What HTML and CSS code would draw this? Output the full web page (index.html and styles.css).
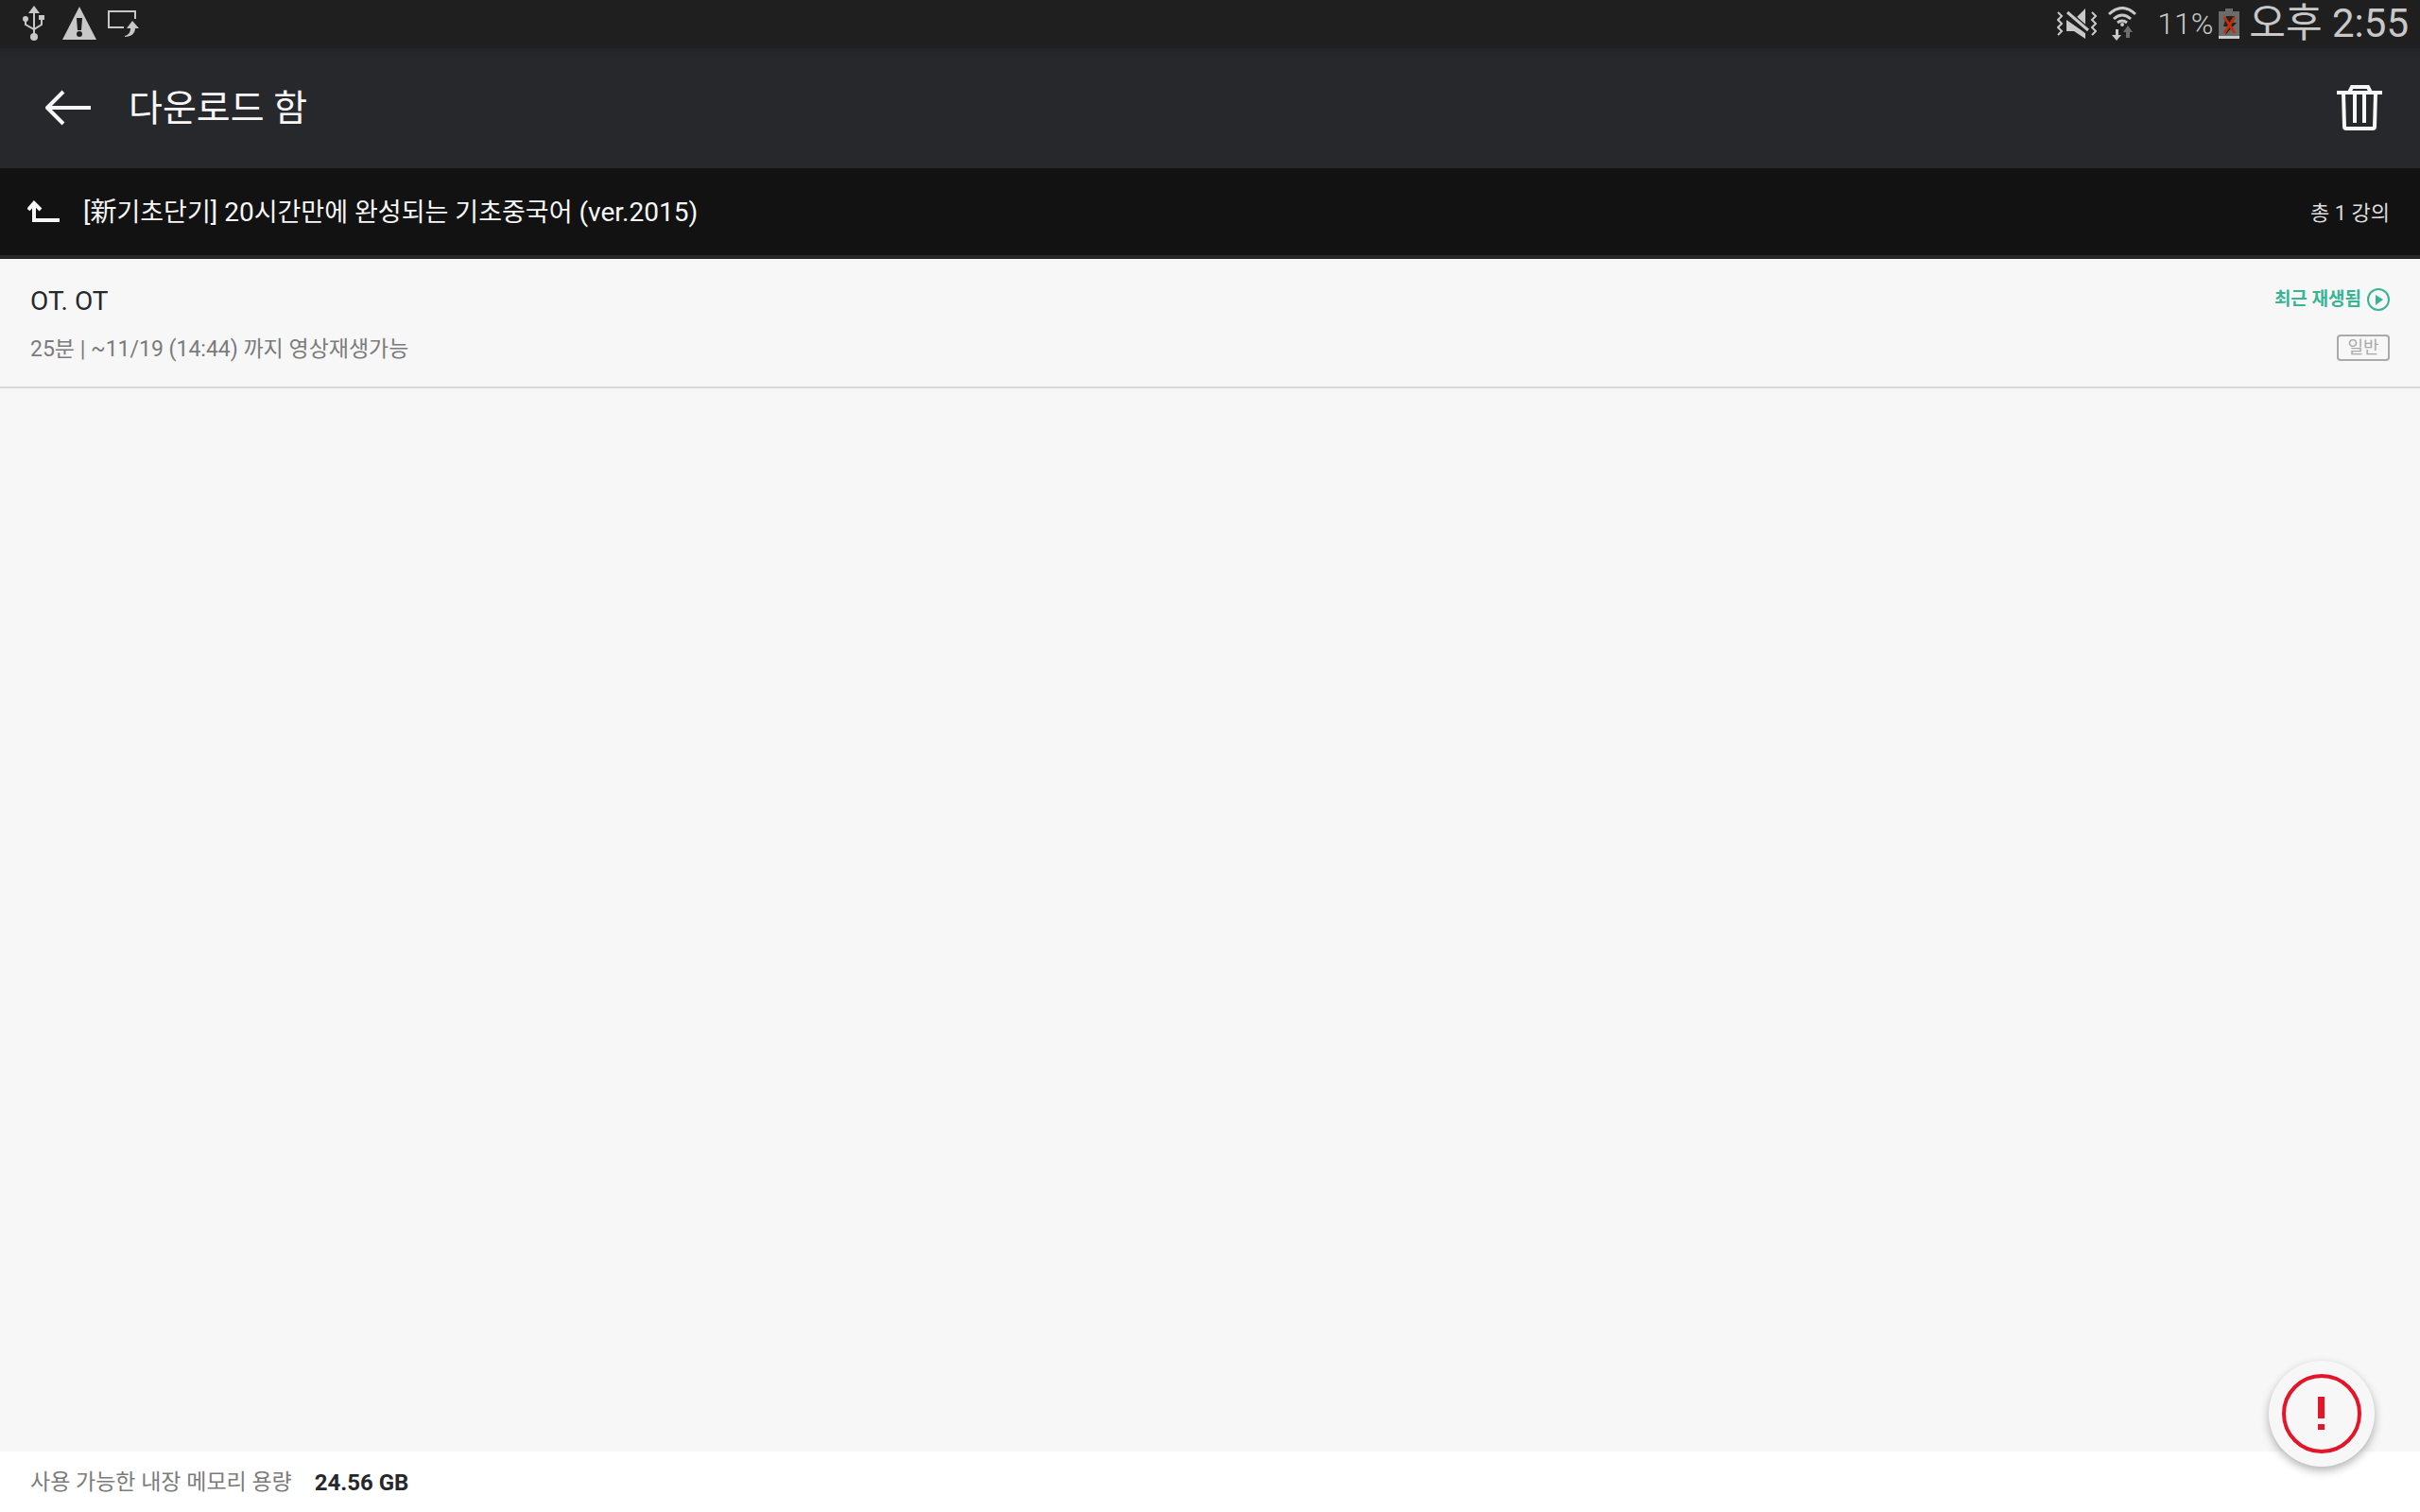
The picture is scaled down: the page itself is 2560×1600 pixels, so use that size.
FILE: index.html
```html
<!DOCTYPE html>
<html lang="ko">
<head>
<meta charset="UTF-8">
<meta name="viewport" content="width=device-width, initial-scale=1.0">
<title>다운로드 함</title>
<link rel="stylesheet" href="styles.css">
</head>
<body>

<div class="statusbar">
  <div class="notifications">
    <svg class="usb" width="24" height="38" viewBox="0 0 24 38" fill="currentColor">
      <path d="M12 0l6 8h-12z"/>
      <circle cx="3" cy="14" r="3"/>
      <path d="M17 10h6v5h-6z"/>
      <circle cx="12" cy="33" r="4"/>
      <path d="M12 6v26M3 14v6l9 5 8-5v-6" fill="none" stroke="currentColor" stroke-width="2"/>
    </svg>
    <svg class="warning" width="36" height="38" viewBox="0 0 36 38">
      <path d="M18 1l18 35h-36z" fill="currentColor"/>
      <path d="M15 13h6l-1 13h-4z" fill="#1f1f1f"/>
      <circle cx="18" cy="30" r="3" fill="#1f1f1f"/>
    </svg>
    <svg class="cast" width="33" height="38" viewBox="0 0 33 38">
      <path d="M17 23H1V6h28v8" fill="none" stroke="currentColor" stroke-width="2"/>
      <path d="M26 16l7 8h-4c0 5-4 9-11 9v-1c4-1 6-4 6-8h-4z" fill="currentColor"/>
    </svg>
  </div>
  <div class="system">
    <svg class="vibrate" width="42" height="34" viewBox="0 0 42 34">
      <path d="M1 5l4 4-4 4 4 4-4 4 4 4-4 4M37 5l4 4-4 4 4 4-4 4 4 4-4 4" fill="none" stroke="currentColor" stroke-width="2"/>
      <path d="M30 1v18l-9-9zM10 13l20 14v6l-12-8h-8z" fill="currentColor"/>
      <path d="M10 5l23 20" stroke="#1f1f1f" stroke-width="7"/>
      <path d="M11 5l22 19" stroke="currentColor" stroke-width="3"/>
    </svg>
    <svg class="wifi" width="30" height="36" viewBox="0 0 30 36">
      <g fill="none" stroke="currentColor" stroke-width="3">
        <path d="M1 8Q15-5 29 8M6 13Q15 5 24 13M10 17Q15 13 20 17"/>
      </g>
      <circle cx="15" cy="19" r="2" fill="currentColor"/>
      <path d="M8 24h3v6h3l-5 6-5-6h4z" fill="currentColor"/>
      <path d="M19 33v-6h-3l5-7 5 7h-3v6z" fill="#6d6d6d"/>
    </svg>
    <span class="percent">11%</span>
    <svg class="battery" width="22" height="32" viewBox="0 0 22 32">
      <path d="M0 3h7v-3h8v3h7v26h-22z" fill="#6b6b6b"/>
      <path d="M0 29h22v3h-22z" fill="#ccc"/>
      <path d="M8 8h9l-2 7h4l-12 13 2-9h-4z" fill="#222"/>
      <path d="M6 9l11 17M17 9l-11 17" stroke="#c1300c" stroke-width="3"/>
    </svg>
    <span class="time">오후 2:55</span>
  </div>
</div>

<header class="appbar">
  <button class="icon-btn" aria-label="뒤로">
    <svg width="48" height="38" viewBox="0 0 48 38" fill="none" stroke="currentColor" stroke-width="4">
      <path d="M48 19H3M19 2L2 19l17 17" stroke-linejoin="round"/>
    </svg>
  </button>
  <h1>다운로드 함</h1>
  <button class="icon-btn" aria-label="삭제">
    <svg width="48" height="48" viewBox="0 0 48 48" fill="none" stroke="currentColor" stroke-width="4">
      <path d="M0 8h48M13 8l3-6h17l3 6M7 8l1 36q0 2 2 2h28q2 0 2-2l1-36M19 8v32M29 8v32"/>
    </svg>
  </button>
</header>

<nav class="folder">
  <a href="#" class="up" aria-label="상위 폴더">
    <svg width="34" height="24" viewBox="0 0 34 24" fill="none" stroke="currentColor" stroke-width="4">
      <path d="M7 3v18h27M1 10l6-7 7 7"/>
    </svg>
  </a>
  <h2>[新<span class="ko">기초단기</span>] 20<span class="ko">시간만에</span> <span class="ko">완성되는</span> <span class="ko">기초중국어</span> (ver.2015)</h2>
  <span class="count">총 1 강의</span>
</nav>

<main>
  <ul class="lectures">
    <li class="lecture">
      <div class="info">
        <h3>OT. OT</h3>
        <p>25분 | ~11/19 (14:44) 까지 영상재생가능</p>
      </div>
      <div class="state">
        <span class="recent">최근 재생됨
          <svg width="24" height="24" viewBox="0 0 24 24">
            <circle cx="12" cy="12" r="11" fill="none" stroke="currentColor" stroke-width="2"/>
            <path d="M9 7l8 5-8 6z" fill="currentColor"/>
          </svg>
        </span>
        <span class="quality">일반</span>
      </div>
    </li>
  </ul>
</main>

<footer>
  <span>사용 가능한 내장 메모리 용량</span>
  <strong>24.56 GB</strong>
</footer>

<button class="fab" aria-label="알림">
  <svg width="84" height="84" viewBox="0 0 84 84">
    <circle cx="42" cy="42" r="40" fill="none" stroke="currentColor" stroke-width="4"/>
    <path d="M38 24h7v23h-7zM38 53h7v6h-7z" fill="currentColor"/>
  </svg>
</button>

</body>
</html>
```
FILE: styles.css
```css
* {
  box-sizing: border-box;
  margin: 0;
  padding: 0;
}
body {
  min-height: 100vh;
  display: flex;
  flex-direction: column;
  font-family: Roboto, "Noto Sans CJK KR", sans-serif;
  background: #f7f7f7;
  color: #27282c;
}
h1, h2, h3 {
  font-weight: 400;
}
svg {
  display: block;
  flex: none;
}
button {
  border: none;
  background: none;
  color: inherit;
  cursor: pointer;
}

/* Android status bar */
.statusbar {
  display: flex;
  justify-content: space-between;
  height: 51px;
  padding: 0 12px 2px 24px;
  background: #1f1f1f;
  color: #c8c8c8;
}
.notifications, .system {
  display: flex;
  align-items: center;
}
.notifications {
  gap: 18px;
}
.cast {
  margin-left: -6px;
}
.wifi {
  margin-left: 12px;
}
.percent {
  margin-left: 22px;
  font-size: 32px;
  font-weight: 300;
}
.battery {
  margin-left: 6px;
}
.time {
  margin-left: 10px;
  font-size: 42px;
  line-height: 48px;
}

/* Title bar */
.appbar {
  display: flex;
  align-items: center;
  height: 127px;
  padding: 0 40px 2px 48px;
  background: linear-gradient(#232427, #27282c 12px);
  color: #f7f7f7;
}
.appbar h1 {
  flex: 1;
  margin-left: 40px;
  padding-top: 2px;
  font-size: 39px;
  line-height: 48px;
}

/* Current folder */
.folder {
  display: flex;
  align-items: center;
  height: 96px;
  padding: 0 32px 0 29px;
  background: #121212;
  border-bottom: 4px solid #27282c;
  color: #f7f7f7;
}
.folder h2 {
  flex: 1;
  margin-left: 25px;
  padding-top: 2px;
  font-size: 28px;
  line-height: 40px;
}
.ko {
  font-size: 27px;
}
.up {
  color: inherit;
}
.count {
  padding-bottom: 2px;
  font-size: 22px;
  color: #ddd;
}

/* Lecture list */
main {
  flex: 1;
}
.lectures {
  list-style: none;
}
.lecture {
  display: flex;
  justify-content: space-between;
  padding: 24px 32px 21px;
  border-bottom: 2px solid #d9d9d9;
}
.info h3 {
  font-size: 28px;
  line-height: 42px;
}
.info p {
  margin-top: 12px;
  font-size: 23px;
  line-height: 36px;
  color: #7b7b7b;
}
.state {
  display: flex;
  flex-direction: column;
  align-items: flex-end;
  gap: 18px;
}
.recent {
  display: flex;
  align-items: center;
  gap: 6px;
  font-size: 19px;
  font-weight: 700;
  line-height: 38px;
  color: #38b495;
}
.quality {
  width: 56px;
  border: 2px solid #aaa;
  border-radius: 4px;
  font-size: 18px;
  line-height: 24px;
  text-align: center;
  color: #aaa;
}

/* Free space */
footer {
  display: flex;
  align-items: center;
  gap: 24px;
  height: 64px;
  padding: 2px 32px 0;
  background: #fff;
  font-size: 23px;
  line-height: 36px;
  color: #7b7b7b;
}
footer strong {
  font-size: 24px;
  color: #27282c;
}

.fab {
  position: fixed;
  right: 48px;
  bottom: 48px;
  width: 112px;
  height: 112px;
  padding: 14px;
  border-radius: 50%;
  background: #f7f7f7;
  box-shadow: 0 4px 10px rgba(0,0,0,0.3);
  color: #e31528;
}
```
